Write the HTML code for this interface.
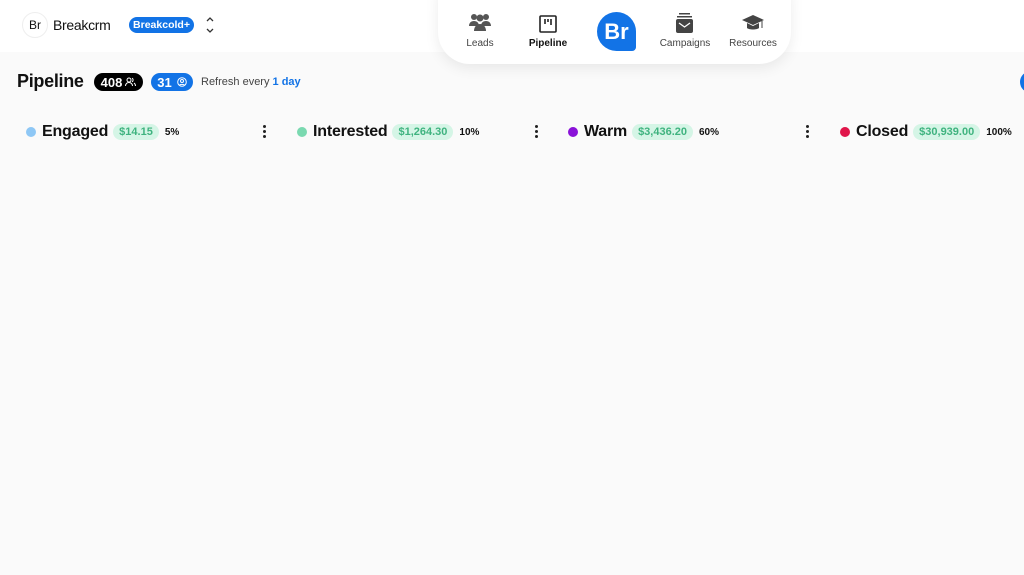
<!DOCTYPE html>
<html><head><meta charset="utf-8"><style>
*{margin:0;padding:0;box-sizing:border-box}
body{width:1024px;height:575px;overflow:hidden;background:#fafafa;font-family:"Liberation Sans",sans-serif;color:#111;position:relative}
.top{position:absolute;left:0;top:0;width:1024px;height:52px;background:#fff}
.abs{position:absolute}
.logo{left:22px;top:12px;width:26px;height:26px;border-radius:50%;border:1px solid #eee;font-size:12px;display:flex;align-items:center;justify-content:center;background:#fff}
.pill{border-radius:10px;color:#fff;font-weight:bold;display:flex;align-items:center;justify-content:center}
.nav{left:438px;top:-30px;width:353px;height:94px;background:#fff;border-radius:32px;box-shadow:0 4px 14px rgba(0,0,0,.08)}
.ni{position:absolute;top:38px;font-size:10px;color:#444;text-align:center;width:70px}
.col{position:absolute;top:122px;height:20px;display:flex;align-items:center}
.dot{width:10px;height:10px;border-radius:50%;margin-right:6px}
.cn{font-size:16px;font-weight:bold;margin-right:5px;letter-spacing:-0.2px}
.amt{background:#d5f5e6;color:#3fb37f;font-size:11px;font-weight:bold;border-radius:8px;padding:2px 6px;margin-right:6px}
.pct{font-size:10px;font-weight:bold}
.kb{position:absolute;top:125px;width:3px}
.kb i{display:block;width:3px;height:3px;border-radius:50%;background:#222;margin-bottom:2px}
</style></head><body>
<div class="top"></div>
<div class="abs logo">Br</div>
<div class="abs" style="left:53px;top:17px;font-size:14px;letter-spacing:-0.3px">Breakcrm</div>
<div class="abs pill" style="left:129px;top:17px;width:65px;height:16px;background:#1273e6;font-size:10.5px">Breakcold+</div>
<svg class="abs" style="left:205px;top:15px" width="10" height="20" viewBox="0 0 10 20" fill="none" stroke="#333" stroke-width="1.3"><path d="M2 6l3-3 3 3M2 14l3 3 3-3"/></svg>

<div class="abs nav"></div>
<svg class="abs" style="left:469px;top:13px" width="22" height="20" viewBox="0 0 22 20" fill="#555"><circle cx="5" cy="4" r="3"/><circle cx="17" cy="4" r="3"/><circle cx="11" cy="5" r="3.5"/><path d="M0 13c0-3 2-5 5-5s5 2 5 5zM12 13c0-3 2-5 5-5s5 2 5 5z"/><path d="M5 18c0-4 2.5-7 6-7s6 3 6 7z"/></svg>
<div class="ni" style="left:445px;top:38px">Leads</div>
<svg class="abs" style="left:539px;top:15px" width="18" height="18" viewBox="0 0 18 18" fill="none" stroke="#222" stroke-width="1.6"><rect x="1" y="1" width="16" height="16" rx="1"/><path d="M6 4v5M9 4v3M12 4v6"/></svg>
<div class="ni" style="left:513px;color:#111;font-weight:bold">Pipeline</div>
<div class="abs" style="left:597px;top:12px;width:39px;height:39px;background:#1273e6;border-radius:20px 20px 4px 20px;color:#fff;font-weight:bold;font-size:22px;display:flex;align-items:center;justify-content:center">Br</div>
<svg class="abs" style="left:675px;top:13px" width="19" height="21" viewBox="0 0 19 21" fill="#444"><rect x="4" y="0" width="11" height="1.5"/><rect x="2" y="3" width="15" height="1.5"/><rect x="1" y="6" width="17" height="14" rx="2"/><path d="M4 10l5.5 4 5.5-4" stroke="#fff" stroke-width="1.3" fill="none"/></svg>
<div class="ni" style="left:650px">Campaigns</div>
<svg class="abs" style="left:742px;top:15px" width="22" height="16" viewBox="0 0 22 16" fill="#444"><path d="M11 0L22 5 11 10 0 5z"/><path d="M5 8v5c2 2 10 2 12 0V8l-6 3z"/><rect x="19.5" y="6" width="1" height="7"/></svg>
<div class="ni" style="left:718px">Resources</div>

<div class="abs" style="left:17px;top:71px;font-size:18px;font-weight:bold;letter-spacing:-0.3px">Pipeline</div>
<div class="abs pill" style="left:94px;top:73px;width:49px;height:18px;background:#000;font-size:13px">408<svg style="margin-left:3px" width="11" height="10" viewBox="0 0 11 10" fill="none" stroke="#fff" stroke-width="1"><circle cx="4" cy="3" r="2"/><path d="M0.5 9c0-2 1.5-3.5 3.5-3.5S7.5 7 7.5 9M7 1.2a2 2 0 010 3.6M9 6c1 .7 1.5 1.7 1.5 3"/></svg></div>
<div class="abs pill" style="left:151px;top:73px;width:42px;height:18px;background:#1273e6;font-size:13px">31<svg style="margin-left:5px" width="10" height="10" viewBox="0 0 10 10" fill="none" stroke="#fff" stroke-width="1"><circle cx="5" cy="5" r="4.3"/><circle cx="5" cy="4" r="1.5"/><path d="M2.5 8.3c.8-1.3 4.2-1.3 5 0"/></svg></div>
<div class="abs" style="left:201px;top:76px;font-size:11px;color:#444">Refresh every <span style="color:#1273e6;font-weight:bold">1 day</span></div>
<div class="abs" style="left:1020px;top:71px;width:22px;height:22px;border-radius:50%;background:#1273e6"></div>

<div class="col" style="left:26px"><div class="dot" style="background:#8ec7f5"></div><span class="cn">Engaged</span><span class="amt">$14.15</span><span class="pct">5%</span></div>
<div class="kb" style="left:263px"><i></i><i></i><i></i></div>
<div class="col" style="left:297px"><div class="dot" style="background:#7ad9b0"></div><span class="cn">Interested</span><span class="amt">$1,264.30</span><span class="pct">10%</span></div>
<div class="kb" style="left:535px"><i></i><i></i><i></i></div>
<div class="col" style="left:568px"><div class="dot" style="background:#8a12d8"></div><span class="cn">Warm</span><span class="amt">$3,436.20</span><span class="pct">60%</span></div>
<div class="kb" style="left:806px"><i></i><i></i><i></i></div>
<div class="col" style="left:840px"><div class="dot" style="background:#e0154a"></div><span class="cn">Closed</span><span class="amt">$30,939.00</span><span class="pct">100%</span></div>
</body></html>
